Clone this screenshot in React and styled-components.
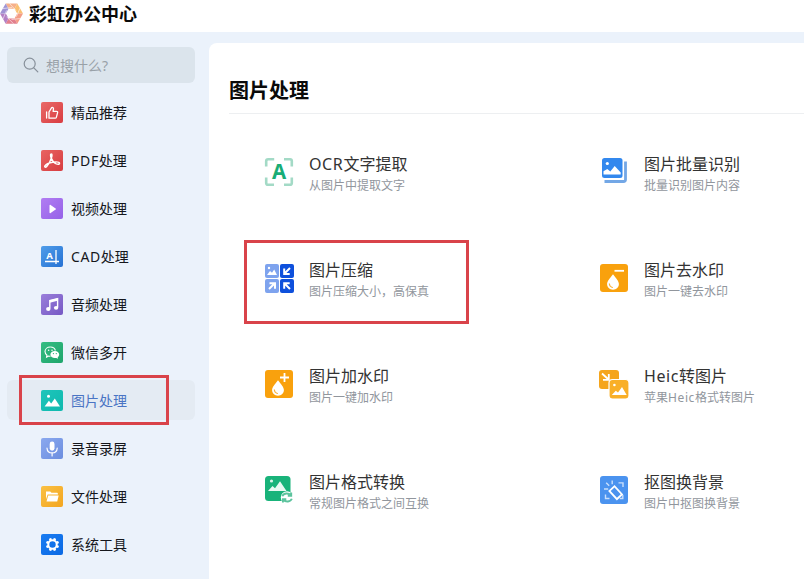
import React from "react";
import styled, { createGlobalStyle } from "styled-components";

const GlobalStyle = createGlobalStyle`
  * {
    box-sizing: border-box;
  }

  body {
    margin: 0;
    background: #fff;
    overflow: hidden;
    font-family: "Noto Sans", "Noto Sans CJK SC", sans-serif;
  }
`;

const Window = styled.div`
  display: flex;
  flex-direction: column;
  width: 100%;
  height: 100vh;
  overflow: hidden;
`;

const Header = styled.header`
  display: flex;
  align-items: center;
  flex: none;
  height: 32px;
  padding-bottom: 5px;
  background: #fff;
`;

const Brand = styled.h1`
  margin: 0 0 0 6px;
  font-size: 18px;
  line-height: 26px;
  font-weight: 700;
  color: #0a0a0a;
`;

const Body = styled.div`
  display: flex;
  flex: 1;
  min-height: 0;
  background: #ebf2fb;
`;

const Sidebar = styled.aside`
  flex: none;
  width: 209px;
  padding: 15px 14px 0 7px;
`;

const SearchBox = styled.div`
  display: flex;
  align-items: center;
  gap: 7px;
  height: 36px;
  padding-left: 16px;
  margin-bottom: 9px;
  border-radius: 6px;
  background: #dbe4ec;
  color: #99a1a8;
  font-size: 14px;
`;

const Nav = styled.nav`
  display: flex;
  flex-direction: column;
  gap: 8px;
`;

const NavItem = styled.a`
  position: relative;
  display: flex;
  align-items: center;
  gap: 8px;
  height: 40px;
  padding-left: 34px;
  border-radius: 6px;
  color: ${(props) => (props.$active ? "#4a74c4" : "#15171c")};
  background: ${(props) => (props.$active ? "#e4ebf3" : "transparent")};
`;

const NavLabel = styled.span`
  padding-top: 2px;
  font-size: 14px;
  line-height: 20px;
`;

/* latin letters sit a little wider than the default */
const Latin = styled.span`
  letter-spacing: 0.6px;
`;

const Main = styled.main`
  flex: 1;
  min-width: 0;
  margin-top: 11px;
  padding: 34px 0 0 20px;
  border-top-left-radius: 8px;
  background: #fff;
`;

const Heading = styled.h2`
  margin: 0;
  height: 37px;
  font-size: 20px;
  line-height: 28px;
  font-weight: 700;
  color: #0a0a0a;
  border-bottom: 1px solid #edeff1;
`;

const ToolGrid = styled.div`
  display: grid;
  grid-template-columns: 335px 1fr;
  grid-auto-rows: 106px;
  padding: 40px 0 0 35px;
`;

const Tool = styled.div`
  position: relative;
  display: flex;
  align-items: flex-start;
  gap: 15px;
  padding-top: 3px;
`;

const ToolText = styled.div`
  margin-top: -4px;
  white-space: nowrap;
`;

const ToolName = styled.div`
  font-size: 16px;
  line-height: 22px;
  color: #333;
`;

const ToolNote = styled.div`
  margin-top: 1px;
  font-size: 12px;
  line-height: 20px;
  color: #91969d;
`;

/* red frame drawn around an entry */
const Frame = styled.span`
  position: absolute;
  top: ${(props) => props.$top}px;
  left: ${(props) => props.$left}px;
  width: ${(props) => props.$width}px;
  height: ${(props) => props.$height}px;
  border: 3px solid #d9434a;
  pointer-events: none;
`;

const SmallSvg = styled.svg`
  flex: none;
  display: block;
  width: 22px;
  height: 21px;
  margin-top: 1px;
`;

const ToolSvg = styled.svg`
  flex: none;
  display: block;
  width: 30px;
  height: 30px;
  overflow: visible;
`;

const Logo = () => (
  <svg width="23" height="24" viewBox="0 0 23 24">
    <path d="M5.700 1.500h11.600L14.500 6.800H8.500z" fill="#f6b08a" />
    <path d="M17.300 1.500L23 11.600h-5.800L14.500 6.800z" fill="#fac072" />
    <path d="M23 11.600l-5.700 10.100-2.800-5.200 2.700-4.900z" fill="#f39c86" />
    <path d="M17.300 21.700H5.700l2.800-5.200h6z" fill="#e27f8d" />
    <path d="M5.700 21.700L0 11.600h5.800l2.700 4.900z" fill="#b481c4" />
    <path d="M0 11.600L5.700 1.500l2.800 5.300-2.700 4.800z" fill="#a094d4" />
    <path
      d="M9.500 1.500l6.500 7M20 6.200l-3.600 8.500M20.500 16.500l-9 1M13.500 21.700l-7-7M3 17l3.500-8.500M2.800 6.600L12 5.500"
      fill="none"
      stroke="#fff"
      strokeWidth="0.800"
      opacity="0.700"
    />
  </svg>
);

const SearchIcon = () => (
  <svg width="16" height="16" viewBox="0 0 16 16" fill="none" stroke="#87909a" strokeWidth="1.200">
    <circle cx="6.700" cy="6.700" r="5.500" />
    <path d="M10.800 10.800l4 4" strokeLinecap="round" />
  </svg>
);

const SmallIcon = ({ from, to, id, children }) => (
  <SmallSvg viewBox="0 0 22 21">
    <defs>
      <linearGradient id={id} x1="0" y1="0" x2="1" y2="1">
        <stop offset="0" stopColor={from} />
        <stop offset="1" stopColor={to} />
      </linearGradient>
    </defs>
    <rect width="22" height="21" rx="2" fill={`url(#${id})`} />
    {children}
  </SmallSvg>
);

const ThumbIcon = () => (
  <SmallIcon id="thumb" from="#e96a68" to="#d93c41">
    <g fill="none" stroke="#fff" strokeWidth="1.300" strokeLinejoin="round" strokeLinecap="round">
      <path d="M5.600 10v6" />
      <path d="M8 16.200V10l2.500-4.200c.8-.8 2.100-.2 2 1l-.4 2.500h3.400c.9 0 1.300.6 1.100 1.400l-1.200 4.500c-.2.6-.6 1-1.200 1z" />
    </g>
  </SmallIcon>
);

const PdfIcon = () => (
  <SmallIcon id="pdf" from="#e96462" to="#d63c40">
    <path
      d="M10.500 4c-1.200-.2-1.100 1.800-.3 4.100.8 2.400 2.800 4.900 5.100 5.800 2 .7 3.400.3 3.200-.7-.3-1.400-3.500-1.500-6.700-1-3.300.5-7 2.100-7.900 3.700-.7 1.200.6 1.900 1.800.6 1.800-1.900 3.900-5.800 4.800-8.900.5-1.900.7-3.500 0-3.600z"
      fill="none"
      stroke="#fff"
      strokeWidth="1.500"
      strokeLinejoin="round"
    />
  </SmallIcon>
);

const VideoIcon = () => (
  <SmallIcon id="video" from="#b17df2" to="#9561e8">
    <path d="M8.500 7.600c0-.7.600-1 1.100-.6l5 3.400c.5.3.5.9 0 1.200l-5 3.400c-.5.4-1.100.1-1.100-.6z" fill="#fff" />
  </SmallIcon>
);

const CadIcon = () => (
  <SmallIcon id="cad" from="#4f9de9" to="#2672d4">
    <text x="5.200" y="12.600" fontSize="9.500" fontWeight="700" fontFamily="Noto Sans, sans-serif" fill="#fff">
      A
    </text>
    <path d="M15 4v14M4 15.500h14" stroke="#fff" strokeWidth="1.300" />
  </SmallIcon>
);

const MusicIcon = () => (
  <SmallIcon id="music" from="#9a7fdb" to="#7659c4">
    <path d="M8.800 14.500V6.600l7.800-2v8.600" fill="none" stroke="#fff" strokeWidth="1.400" />
    <path d="M8.800 6.200l7.800-2v2.600l-7.800 2z" fill="#fff" />
    <ellipse cx="7.300" cy="15" rx="2.200" ry="1.900" fill="#fff" />
    <ellipse cx="15.100" cy="13.800" rx="2.200" ry="1.900" fill="#fff" />
  </SmallIcon>
);

const WechatIcon = () => (
  <SmallIcon id="wechat" from="#35bd83" to="#1ea56c">
    <path d="M9.300 5C6.300 5 4 7 4 9.600c0 1.500.8 2.700 2 3.600l-.4 1.900 2-1.100c.6.1 1.200.2 1.900.2" fill="none" stroke="#fff" strokeWidth="1.100" />
    <path d="M9.300 5c2.500 0 4.600 1.400 5.100 3.500" fill="none" stroke="#fff" strokeWidth="1.100" />
    <circle cx="7.600" cy="8.300" r=".75" fill="#fff" />
    <circle cx="11" cy="8.300" r=".75" fill="#fff" />
    <path d="M13.800 8.900c2.500 0 4.400 1.600 4.400 3.600 0 1.100-.6 2.100-1.500 2.700l.3 1.500-1.700-.8c-.5.1-1 .2-1.500.2-2.500 0-4.400-1.600-4.400-3.600s1.900-3.600 4.400-3.600z" fill="#fff" />
    <circle cx="12.400" cy="11.600" r=".65" fill="#2bb079" />
    <circle cx="15.300" cy="11.600" r=".65" fill="#2bb079" />
  </SmallIcon>
);

const PictureIcon = () => (
  <SmallIcon id="picture" from="#1ec5bb" to="#0fb9ae">
    <circle cx="7.500" cy="6.300" r="1.500" fill="#fff" />
    <path d="M3.600 16.500l4.300-5.700 2.300 2.600 3.600-4.800 5.200 7.900z" fill="#fff" />
  </SmallIcon>
);

const MicIcon = () => (
  <SmallIcon id="mic" from="#8ba9ef" to="#6c8edf">
    <rect x="8.700" y="3.500" width="4.800" height="9.200" rx="2.400" fill="#fff" />
    <path d="M6 10.200c.2 2.900 2.200 4.700 5.100 4.700s4.900-1.800 5.100-4.700M11.100 15v3" fill="none" stroke="#fff" strokeWidth="1.200" strokeLinecap="round" />
  </SmallIcon>
);

const FolderIcon = () => (
  <SmallIcon id="folder" from="#fac144" to="#f3a51f">
    <path d="M5 5.500h4.200l1.300 1.300h5.500c.5 0 .9.400.9.900v.9H6.600L5 13.200z" fill="#fff" />
    <path d="M7.200 9.400h10.500l-1.500 6H5.500z" fill="#fff" />
  </SmallIcon>
);

const GearIcon = () => (
  <SmallIcon id="gear" from="#1a7df2" to="#0b69e3">
    <circle cx="11.500" cy="10.500" r="4.200" fill="none" stroke="#fff" strokeWidth="2" />
    {[0, 45, 90, 135, 180, 225, 270, 315].map((angle) => (
      <rect key={angle} x="10.200" y="3.900" width="2.600" height="2.200" rx=".4" fill="#fff" transform={`rotate(${angle + 22.5} 11.5 10.5)`} />
    ))}
  </SmallIcon>
);

const OcrIcon = () => (
  <ToolSvg viewBox="0 0 30 30">
    <path
      d="M2.200 9.500V4c0-1.100.9-1.800 2-1.800h6M20 2.200h6c1.100 0 1.800.7 1.800 1.800v5.500M27.800 20.500V26c0 1.100-.7 1.800-1.800 1.800h-6M10 27.800H4c-1.100 0-1.800-.7-1.800-1.800v-5.500"
      fill="none"
      stroke="#a3dac6"
      strokeWidth="2.600"
    />
    <text x="15" y="21.500" textAnchor="middle" fontSize="20.500" fontWeight="700" fontFamily="Noto Sans, sans-serif" fill="#18ad76">
      A
    </text>
  </ToolSvg>
);

const BatchIcon = () => (
  <ToolSvg viewBox="0 0 30 30">
    <path d="M26.500 4.500v18c0 1.100-.9 2-2 2h-19" fill="none" stroke="#73a7e6" strokeWidth="2.800" />
    <rect x="3" y="1" width="20.500" height="20" rx="2.500" fill="#3388ee" />
    <circle cx="8.300" cy="6.500" r="1.600" fill="#fff" />
    <path d="M4.500 17.500v-3.200L8.300 12l3 2.600 4.400-5.600 6 6.600v1.900z" fill="#fff" />
  </ToolSvg>
);

const CompressIcon = () => (
  <ToolSvg viewBox="0 0 30 30">
    <rect x="1" y="1" width="14" height="14" rx="2" fill="#7ea3ee" />
    <rect x="16" y="1" width="14" height="14" rx="2" fill="#0e50dc" />
    <rect x="1" y="16" width="14" height="14" rx="2" fill="#7ea3ee" />
    <rect x="16" y="16" width="14" height="14" rx="2" fill="#0e50dc" />
    <circle cx="5" cy="5" r="1.200" fill="#fff" />
    <path d="M3 12l3-4 2 1.800L10.200 6.500 13 12z" fill="#fff" />
    <g fill="none" stroke="#fff" strokeWidth="2">
      <path d="M26 5l-5 5M20.200 5.500V11h5.500" />
      <path d="M5 26l5-5M5.500 20.200H11v5.500" />
      <path d="M26 26l-5-5M25.700 20.200h-5.500v5.500" />
    </g>
  </ToolSvg>
);

const DropIcon = ({ add }) => (
  <ToolSvg viewBox="0 0 30 30">
    <rect x="1" y="1" width="28" height="28" rx="3" fill="#f9a10d" />
    <path d="M14 11.200c3.300 4.200 5.900 7 5.900 9.900 0 3.200-2.600 5.600-5.900 5.600s-5.900-2.400-5.900-5.600c0-2.900 2.600-5.700 5.900-9.900z" fill="#fff" />
    <path d="M10.300 20.800c.2 2 1.300 3.200 3.100 3.700" fill="none" stroke="#f9b23a" strokeWidth="1.100" strokeLinecap="round" />
    <path d={add ? "M16 8.500h9M20.500 4v9" : "M15.500 7.800h9.500"} stroke="#fff" strokeWidth="1.800" />
  </ToolSvg>
);

const HeicIcon = () => (
  <ToolSvg viewBox="0 0 30 30">
    <rect x="0" y="1" width="20" height="19" rx="3" fill="#f5a51c" />
    <path d="M3 4.500l6 5.500M9.800 5v5.800H4" fill="none" stroke="#fff" strokeWidth="1.800" />
    <rect x="10" y="10.500" width="20" height="19.500" rx="3.500" fill="#f9af27" stroke="#fff" strokeWidth="1.200" />
    <circle cx="15.400" cy="16" r="1.300" fill="#fff" />
    <path d="M12.800 26l4-4.300 2.200 1.800 4-5.500 4.700 8z" fill="#fff" />
  </ToolSvg>
);

const FormatIcon = () => (
  <ToolSvg viewBox="0 0 30 30">
    <rect x="1" y="1" width="25.500" height="25" rx="3.500" fill="#19b37a" />
    <circle cx="7.500" cy="6" r="1.600" fill="#d9f4e9" />
    <path d="M4 16l4.500-5 2.500 2.300 5-7 6.500 9.700z" fill="#e9f9f2" />
    <circle cx="23" cy="22.500" r="6.200" fill="#fff" />
    <g fill="none" stroke="#5cc39d" strokeWidth="1.900">
      <path d="M18.300 21.200c1.200-3.300 6.300-3.700 8.500-.8M27.200 17.500v3.300h-3.400" />
      <path d="M27.800 23.800c-1.200 3.300-6.300 3.700-8.500.8M18.900 27.500v-3.300h3.400" />
    </g>
  </ToolSvg>
);

const CutoutIcon = () => (
  <ToolSvg viewBox="0 0 30 30">
    <rect x="1" y="1" width="28" height="28" rx="3" fill="#4b93ef" />
    <rect x="13.200" y="12.200" width="7" height="11" fill="none" stroke="#fff" strokeWidth="1.800" transform="rotate(-43 16.7 17.7)" />
    <g fill="none" stroke="#c9dffc" strokeWidth="1.400">
      <path d="M13.200 5.500v3.800M7.200 7.700l3 3M5 14h4.200M19.500 7.900H24v4M6.500 19.500v4h4M23.800 20v3.500h-3" />
    </g>
  </ToolSvg>
);

const navItems = [
  { id: "featured", label: "精品推荐", icon: <ThumbIcon /> },
  { id: "pdf", latin: "PDF", label: "处理", icon: <PdfIcon /> },
  { id: "video", label: "视频处理", icon: <VideoIcon /> },
  { id: "cad", latin: "CAD", label: "处理", icon: <CadIcon /> },
  { id: "audio", label: "音频处理", icon: <MusicIcon /> },
  { id: "wechat", label: "微信多开", icon: <WechatIcon /> },
  { id: "picture", label: "图片处理", icon: <PictureIcon />, active: true },
  { id: "record", label: "录音录屏", icon: <MicIcon /> },
  { id: "file", label: "文件处理", icon: <FolderIcon /> },
  { id: "system", label: "系统工具", icon: <GearIcon /> },
];

const tools = [
  { id: "ocr", latin: "OCR", name: "文字提取", note: "从图片中提取文字", icon: <OcrIcon /> },
  { id: "batch", name: "图片批量识别", note: "批量识别图片内容", icon: <BatchIcon /> },
  { id: "compress", name: "图片压缩", note: "图片压缩大小，高保真", icon: <CompressIcon />, framed: true },
  { id: "unmark", name: "图片去水印", note: "图片一键去水印", icon: <DropIcon /> },
  { id: "mark", name: "图片加水印", note: "图片一键加水印", icon: <DropIcon add /> },
  {
    id: "heic",
    latin: "Heic",
    name: "转图片",
    note: (
      <>
        苹果<Latin>Heic</Latin>格式转图片
      </>
    ),
    icon: <HeicIcon />,
  },
  { id: "format", name: "图片格式转换", note: "常规图片格式之间互换", icon: <FormatIcon /> },
  { id: "cutout", name: "抠图换背景", note: "图片中抠图换背景", icon: <CutoutIcon /> },
];

const App = () => {
  return (
    <Window>
      <GlobalStyle />
      <Header>
        <Logo />
        <Brand>彩虹办公中心</Brand>
      </Header>
      <Body>
        <Sidebar>
          <SearchBox>
            <SearchIcon />
            想搜什么?
          </SearchBox>
          <Nav>
            {navItems.map((item) => (
              <NavItem key={item.id} $active={item.active}>
                {item.icon}
                <NavLabel>
                  {item.latin && <Latin>{item.latin}</Latin>}
                  {item.label}
                </NavLabel>
                {item.active && <Frame $top={-5} $left={12} $width={150} $height={50} />}
              </NavItem>
            ))}
          </Nav>
        </Sidebar>
        <Main>
          <Heading>图片处理</Heading>
          <ToolGrid>
            {tools.map((tool) => (
              <Tool key={tool.id}>
                {tool.icon}
                <ToolText>
                  <ToolName>
                    {tool.latin && <Latin>{tool.latin}</Latin>}
                    {tool.name}
                  </ToolName>
                  <ToolNote>{tool.note}</ToolNote>
                </ToolText>
                {tool.framed && <Frame $top={-20} $left={-20} $width={225} $height={84} />}
              </Tool>
            ))}
          </ToolGrid>
        </Main>
      </Body>
    </Window>
  );
};

export default App;
